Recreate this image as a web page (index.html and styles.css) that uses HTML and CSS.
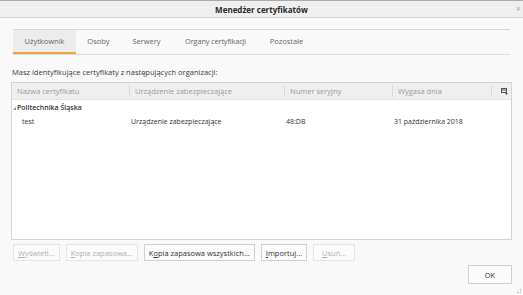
FILE: index.html
```html
<!DOCTYPE html>
<html lang="pl">
<head>
    <meta charset="UTF-8">
    <title>Menedżer certyfikatów</title>
    <link rel="stylesheet" href="styles.css">
</head>
<body>
    <div class="titlebar">
        <span class="title">Menedżer certyfikatów</span>
        <span class="close">&#215;</span>
    </div>

    <div class="content">
        <div class="tabs">
            <div class="tab tab-user selected">Użytkownik</div>
            <div class="tab tab-people">Osoby</div>
            <div class="tab tab-servers">Serwery</div>
            <div class="tab tab-ca">Organy certyfikacji</div>
            <div class="tab tab-other">Pozostałe</div>
        </div>

        <p class="intro">Masz identyfikujące certyfikaty z następujących organizacji:</p>

        <div class="list">
            <div class="list-head">
                <div class="col">Nazwa certyfikatu</div>
                <div class="col">Urządzenie zabezpieczające</div>
                <div class="col">Numer seryjny</div>
                <div class="col">Wygasa dnia</div>
                <div class="col picker">
                    <svg width="7" height="7" viewBox="0 0 7 7">
                        <rect x="0.5" y="0.5" width="5" height="4" fill="none" stroke="#555"/>
                        <line x1="0.5" y1="2" x2="5.5" y2="2" stroke="#555"/>
                        <path d="M4 5 L7 5 L5.5 7 Z" fill="#555"/>
                    </svg>
                </div>
            </div>
            <div class="group">
                <span class="twisty"></span>Politechnika Śląska
            </div>
            <div class="row">
                <div class="cell first">test</div>
                <div class="cell">Urządzenie zabezpieczające</div>
                <div class="cell">48:DB</div>
                <div class="cell">31 października 2018</div>
                <div class="cell"></div>
            </div>
        </div>

        <div class="actions">
            <button class="btn" disabled><u>W</u>yświetl...</button>
            <button class="btn" disabled><u>K</u>opia zapasowa...</button>
            <button class="btn">K<u>o</u>pia zapasowa wszystkich...</button>
            <button class="btn"><u>I</u>mportuj...</button>
            <button class="btn" disabled><u>U</u>suń...</button>
        </div>

        <div class="footer">
            <button class="btn ok">OK</button>
        </div>
    </div>
    <span class="grip"></span>
</body>
</html>
```

FILE: styles.css
```css
body {
    margin: 0;
    background-color: #f9f9f9;
    font-family: "Open Sans", "Noto Sans", sans-serif;
    font-size: 7.5px;
    color: #3a3a3a;
    height: 295px;
    overflow: hidden;
    position: relative;
}

.titlebar {
    height: 16px;
    border-top: 1px solid #ababab;
    border-bottom: 1px solid #d6d6d6;
    background-color: #efefef;
    display: flex;
    align-items: center;
    justify-content: center;
    position: relative;
}

.title {
    font-weight: bold;
    font-size: 8px;
    color: #2a2a2a;
}

.close {
    position: absolute;
    right: 2px;
    top: 3px;
    font-size: 9px;
    line-height: 9px;
    color: #aaa;
}

.content {
    padding: 11px 11px 0 11px;
}

.tabs {
    display: flex;
    margin: 0 2px 0 2px;
    border-top: 1px solid #d8d8d8;
    border-bottom: 1px solid #dcdcdc;
}

.tab {
    height: 22px;
    line-height: 22px;
    text-align: center;
    white-space: nowrap;
    color: #666;
    border-bottom: 2px solid transparent;
}

.tab.selected {
    background-color: #ececec;
    border-bottom-color: #f0a33a;
}

.tab-user { width: 63px; }
.tab-people { width: 45px; }
.tab-servers { width: 51px; }
.tab-ca { width: 87px; letter-spacing: -0.2px; }
.tab-other { width: 55px; }

.intro {
    margin: 11px 0 0 1px;
    height: 12px;
    line-height: 12px;
}

.list {
    margin-top: 4px;
    height: 156px;
    border: 1px solid #d4d4d4;
    background-color: #fff;
}

.list-head,
.row {
    display: grid;
    grid-template-columns: 117px 155px 108px 99px 1fr;
}

.list-head {
    height: 16px;
    background-color: #efefef;
    border-bottom: 1px solid #e2e2e2;
}

.list-head .col {
    padding-left: 5px;
    color: #999;
    border-left: 1px solid #d8d8d8;
    margin: 2px 0;
    line-height: 12px;
}

.list-head .col:first-child {
    border-left: none;
}

.list-head .picker {
    display: flex;
    align-items: center;
    justify-content: center;
}

.group {
    height: 14px;
    line-height: 14px;
    margin-top: 1px;
    padding-left: 1px;
    font-weight: 600;
    font-size: 7px;
    color: #333;
}

.twisty {
    display: inline-block;
    width: 0;
    height: 0;
    border-left: 3px solid transparent;
    border-bottom: 3px solid #888;
    margin-right: 1px;
}

.row {
    height: 14px;
    line-height: 14px;
    font-size: 7px;
    color: #333;
}

.row .cell {
    padding-left: 2px;
}

.row .cell.first {
    padding-left: 10px;
}

.actions {
    display: flex;
    gap: 6px;
    margin: 4px 0 0 2px;
}

.btn {
    font-family: inherit;
    font-size: 7.5px;
    height: 17px;
    min-width: 42px;
    padding: 0 4px;
    background-color: #fbfbfb;
    border: 1px solid #d0d0d0;
    border-radius: 0;
    color: #333;
}

.btn:disabled {
    color: #b0b0b0;
    border-color: #e4e4e4;
}

.footer {
    display: flex;
    justify-content: flex-end;
    margin-top: 4px;
}

.ok {
    width: 44px;
    height: 19px;
}

.grip {
    position: absolute;
    right: 2px;
    bottom: 2px;
    width: 3px;
    height: 3px;
    border-right: 1px dotted #bbb;
    border-bottom: 1px dotted #bbb;
}
```
